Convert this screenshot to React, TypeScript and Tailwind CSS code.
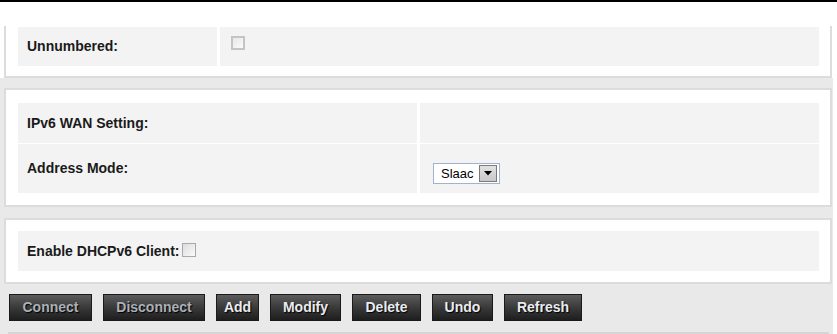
const buttons = [
  { label: 'Connect', w: 'w-[83px]', disabled: true },
  { label: 'Disconnect', w: 'w-[102px]', disabled: true },
  { label: 'Add', w: 'w-[43px]', disabled: false },
  { label: 'Modify', w: 'w-[71px]', disabled: false },
  { label: 'Delete', w: 'w-[69px]', disabled: false },
  { label: 'Undo', w: 'w-[61px]', disabled: false },
  { label: 'Refresh', w: 'w-[78px]', disabled: false },
];

function Checkbox({ className = '' }: { className?: string }) {
  return (
    <span
      className={`inline-block w-[14px] h-[14px] border border-[#a9a9a9] bg-gradient-to-br from-[#dcdcdc] to-[#fbfbfb] ${className}`}
    />
  );
}

export default function App() {
  return (
    <div className="w-[837px] h-[334px] overflow-hidden bg-white font-['Liberation_Sans',Arial,sans-serif] text-[#1a1a1a]">
      <div className="h-[2px] bg-black" />
      <div className="h-[24px] bg-white" />

      {/* Unnumbered panel */}
      <div className="w-[833px] bg-white">
        <div className="ml-[4px] w-[828px] bg-white border-x-2 border-b-2 border-[#dcdcdc] pt-[1px] pb-[10px] pl-[12px] pr-[11px]">
          <div className="grid grid-cols-[199px_1fr] gap-x-[3px] h-[39px]">
            <div className="bg-[#f3f3f3] flex items-center pl-[9px] text-[14px] font-bold">Unnumbered:</div>
            <div className="bg-[#f3f3f3] pl-[11px] pt-[9px]">
              <span className="block w-[14px] h-[14px] border-2 border-[#c4c4c4] bg-gradient-to-br from-[#e8e8e8] to-[#fafafa]" />
            </div>
          </div>
        </div>
      </div>

      <div className="w-[833px] bg-[#e9e9e9] pt-[10px]">
        {/* IPv6 panel */}
        <div className="ml-[4px] w-[828px] bg-white border-2 border-[#dcdcdc] pt-[13px] pb-[12px] pl-[12px] pr-[11px]">
          <div className="grid grid-cols-2 gap-x-[3px] gap-y-[1px]">
            <div className="bg-[#f3f3f3] h-[40px] flex items-center pl-[9px] text-[14px] font-bold">IPv6 WAN Setting:</div>
            <div className="bg-[#f3f3f3] h-[40px]" />
            <div className="bg-[#f3f3f3] h-[49px] flex items-center pl-[9px] text-[14px] font-bold">Address Mode:</div>
            <div className="bg-[#f3f3f3] h-[49px] pl-[13px] pt-[19px]">
              <div className="w-[67px] h-[21px] border border-[#9fb3d1] bg-white flex items-center justify-between pl-[7px] pr-[2px] text-[13px] text-black">
                <span>Slaac</span>
                <span className="w-[18px] h-[17px] border border-[#7a7a7a] bg-gradient-to-b from-[#e2e2e2] to-[#c8c8c8] flex items-center justify-center">
                  <svg width="8" height="5" viewBox="0 0 8 5">
                    <path d="M0 0 H8 L4 4.5 Z" fill="#000" />
                  </svg>
                </span>
              </div>
            </div>
          </div>
        </div>

        {/* DHCPv6 panel */}
        <div className="ml-[4px] mt-[11px] w-[828px] bg-white border-2 border-[#dcdcdc] pt-[11px] pb-[11px] pl-[12px] pr-[11px]">
          <div className="bg-[#f3f3f3] h-[40px] flex items-center pl-[9px] text-[14px] font-bold gap-[3px]">
            <span>Enable DHCPv6 Client:</span>
            <Checkbox className="-mt-[3px]" />
          </div>
        </div>

        {/* buttons */}
        <div className="flex gap-[11px] pl-[9px] pt-[10px] h-[48px]">
          {buttons.map((b) => (
            <div
              key={b.label}
              className={`${b.w} h-[27px] flex items-center justify-center border border-[#1a1a1a] bg-gradient-to-b from-[#5c5c5c] via-[#3a3a3a] to-[#1e1e1e] text-[14px] font-bold [text-shadow:1px_1px_1px_#000] ${
                b.disabled ? 'text-[#a9b0b8]' : 'text-[#e8ecf2]'
              }`}
            >
              {b.label}
            </div>
          ))}
        </div>
        <div className="ml-[8px] w-[821px] border-t-2 border-[#d6d6d6]" />
      </div>
    </div>
  );
}
